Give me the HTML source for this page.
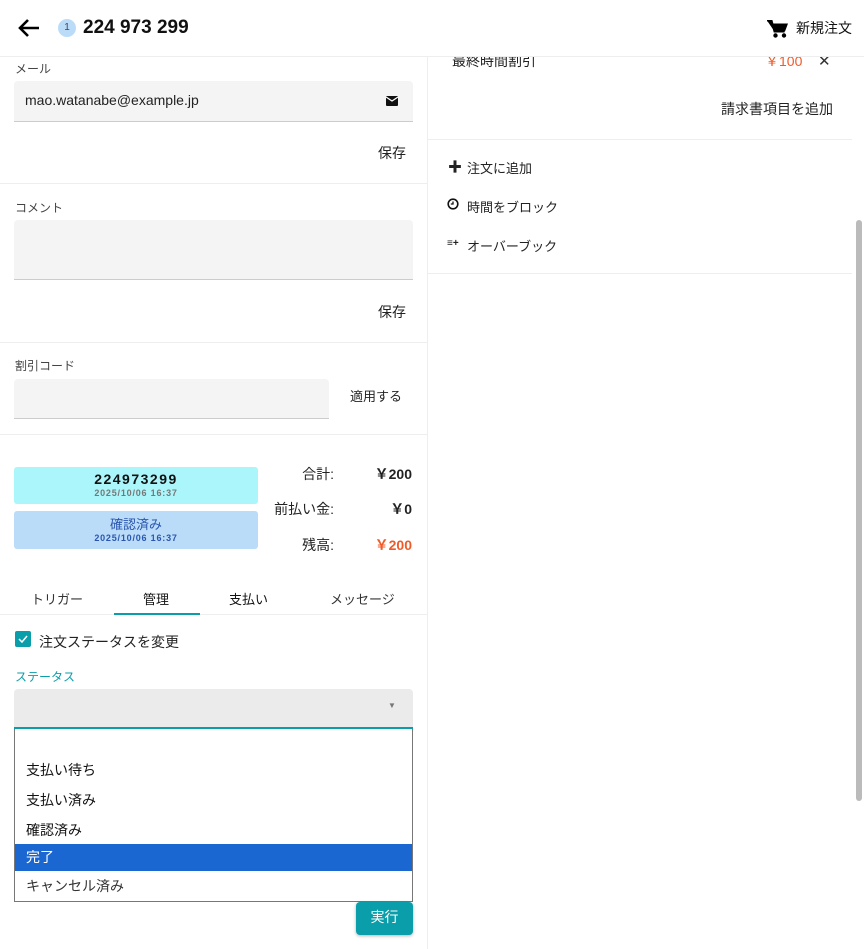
<!DOCTYPE html>
<html><head><meta charset="utf-8"><style>
*{box-sizing:border-box;margin:0;padding:0}
body{width:864px;height:949px;overflow:hidden;background:#fff;font-family:"Liberation Sans","Noto Sans CJK JP",sans-serif;color:#222;position:relative;font-size:14px}
.a{position:absolute}
.hdr{left:0;top:0;width:864px;height:57px;background:#fff;border-bottom:1px solid #eee;z-index:5}
.line{height:1px;background:#eee}
.inp{background:#f4f4f4;border-bottom:1px solid #ccc;border-radius:4px 4px 0 0}
.lbl{font-size:12px;color:#444}
.btn{font-size:14px;color:#222}
.r{text-align:right}
</style></head><body>
<div class="a hdr">
 <svg class="a" style="left:17px;top:17px" width="24" height="22" viewBox="0 0 24 22"><path d="M22 11H4M11 3L3 11L11 19" stroke="#000" stroke-width="2.6" fill="none"/></svg>
 <div class="a" style="left:58px;top:19px;width:18px;height:18px;border-radius:50%;background:#bbdcf8;font-size:10px;color:#445;text-align:center;line-height:18px">1</div>
 <div class="a" style="left:83px;top:17px;font-size:19px;font-weight:bold;color:#111">224 973 299</div>
 <svg class="a" style="left:767px;top:20px" width="22" height="18" viewBox="0 0 22 18"><path d="M0 0.5h4.5l1 3h15.5l-3 8H7.5z" fill="#000"/><path d="M0 0.5h4.5l3 11h10" stroke="#000" stroke-width="2" fill="none"/><circle cx="8.5" cy="15.5" r="2.2" fill="#000"/><circle cx="17" cy="15.5" r="2.2" fill="#000"/></svg>
 <div class="a" style="left:796px;top:18px;font-size:14px;color:#111">新規注文</div>
</div>
<div class="a" style="left:427px;top:57px;width:1px;height:892px;background:#eee"></div>

<div class="a lbl" style="left:15px;top:60px">メール</div>
<div class="a inp" style="left:14px;top:81px;width:399px;height:41px"></div>
<div class="a" style="left:25px;top:92px;font-size:14px;color:#222">mao.watanabe@example.jp</div>
<svg class="a" style="left:386px;top:96px" width="12" height="10" viewBox="0 0 12 10"><rect width="12" height="10" rx="1" fill="#111"/><path d="M0 1l6 4 6-4" stroke="#fff" stroke-width="1.3" fill="none"/></svg>
<div class="a btn" style="left:378px;top:143px">保存</div>
<div class="a line" style="left:0;top:183px;width:427px"></div>

<div class="a lbl" style="left:15px;top:199px">コメント</div>
<div class="a inp" style="left:14px;top:220px;width:399px;height:60px"></div>
<div class="a btn" style="left:378px;top:302px">保存</div>
<div class="a line" style="left:0;top:342px;width:427px"></div>

<div class="a lbl" style="left:15px;top:357px">割引コード</div>
<div class="a inp" style="left:14px;top:379px;width:315px;height:40px"></div>
<div class="a btn" style="left:350px;top:386px;font-size:13px">適用する</div>
<div class="a line" style="left:0;top:434px;width:427px"></div>

<div class="a" style="left:14px;top:467px;width:244px;height:37px;background:#aaf6fb;border-radius:3px;text-align:center">
 <div style="font-size:14px;font-weight:bold;letter-spacing:1.5px;color:#111;margin-top:4px;line-height:17px">224973299</div>
 <div style="font-size:9px;color:#777;letter-spacing:.8px;font-weight:bold;line-height:11px">2025/10/06 16:37</div></div>
<div class="a" style="left:14px;top:511px;width:244px;height:38px;background:#bbdcf8;border-radius:3px;text-align:center">
 <div style="font-size:13px;color:#2a56b0;margin-top:5px;line-height:17px">確認済み</div>
 <div style="font-size:9px;color:#2a56b0;letter-spacing:.8px;font-weight:bold;line-height:11px">2025/10/06 16:37</div></div>
<div class="a r" style="left:250px;top:464px;width:84px;font-size:14px">合計:</div>
<div class="a r" style="left:340px;top:464px;width:72px;font-size:14px;font-weight:bold">￥200</div>
<div class="a r" style="left:250px;top:499px;width:84px;font-size:14px">前払い金:</div>
<div class="a r" style="left:340px;top:499px;width:72px;font-size:14px;font-weight:bold">￥0</div>
<div class="a r" style="left:250px;top:535px;width:84px;font-size:14px">残高:</div>
<div class="a r" style="left:340px;top:535px;width:72px;font-size:14px;font-weight:bold;color:#f05a28">￥200</div>

<div class="a" style="left:31px;top:589px;font-size:13px;color:#333">トリガー</div>
<div class="a" style="left:143px;top:589px;font-size:13px;color:#111">管理</div>
<div class="a" style="left:229px;top:589px;font-size:13px;color:#111">支払い</div>
<div class="a" style="left:330px;top:589px;font-size:13px;color:#333">メッセージ</div>
<div class="a line" style="left:0;top:614px;width:427px"></div>
<div class="a" style="left:114px;top:613px;width:86px;height:2px;background:#0a9eaa"></div>

<div class="a" style="left:15px;top:631px;width:16px;height:16px;background:#0a9eaa;border-radius:2px"></div>
<svg class="a" style="left:15px;top:631px" width="16" height="16"><path d="M4 8l3 3 5-6" stroke="#fff" stroke-width="1.5" fill="none"/></svg>
<div class="a" style="left:39px;top:632px;font-size:14px;color:#222">注文ステータスを変更</div>
<div class="a" style="left:15px;top:668px;font-size:12px;color:#0a9eaa">ステータス</div>
<div class="a" style="left:14px;top:689px;width:399px;height:40px;background:#ebebeb;border-radius:4px 4px 0 0;border-bottom:2px solid #0a9eaa"></div>
<div class="a" style="left:388px;top:701px;font-size:8px;color:#777">▼</div>
<div class="a" style="left:14px;top:729px;width:399px;height:173px;border:1px solid #777;border-top:none;background:#fff;font-size:14px;color:#111">
 <div class="a" style="left:11px;top:31px">支払い待ち</div>
 <div class="a" style="left:11px;top:61px">支払い済み</div>
 <div class="a" style="left:11px;top:91px">確認済み</div>
 <div class="a" style="left:0;top:115px;width:397px;height:27px;background:#1a67d2;color:#fff;padding:3px 11px">完了</div>
 <div class="a" style="left:11px;top:147px;color:#333">キャンセル済み</div>
</div>
<div class="a" style="left:356px;top:902px;width:57px;height:33px;background:#0a9eaa;border-radius:4px;color:#fff;font-size:14px;text-align:center;line-height:31px;box-shadow:0 1px 3px rgba(0,0,0,.3)">実行</div>

<div class="a" style="left:452px;top:51px;font-size:14px;color:#222">最終時間割引</div>
<div class="a" style="left:765px;top:51px;font-size:14px;color:#f05a28">￥100</div>
<div class="a" style="left:818px;top:52px;font-size:15px;color:#333">✕</div>
<div class="a" style="left:721px;top:99px;font-size:14px;color:#222">請求書項目を追加</div>
<div class="a line" style="left:428px;top:139px;width:424px"></div>
<div class="a" style="left:448px;top:157px;font-size:14px;font-weight:bold">✚</div>
<div class="a" style="left:467px;top:158px;font-size:13px">注文に追加</div>
<svg class="a" style="left:447px;top:198px" width="12" height="12"><circle cx="6" cy="6" r="4.8" stroke="#111" stroke-width="1.6" fill="none"/><path d="M6 3.5V6H3.8" stroke="#111" stroke-width="1.3" fill="none"/></svg>
<div class="a" style="left:467px;top:197px;font-size:13px">時間をブロック</div>
<div class="a" style="left:447px;top:238px;font-size:10px;font-weight:bold">≡+</div>
<div class="a" style="left:467px;top:236px;font-size:13px">オーバーブック</div>
<div class="a line" style="left:428px;top:273px;width:424px"></div>
<div class="a" style="left:856px;top:220px;width:6px;height:581px;background:#bbb;border-radius:3px"></div>
</body></html>
